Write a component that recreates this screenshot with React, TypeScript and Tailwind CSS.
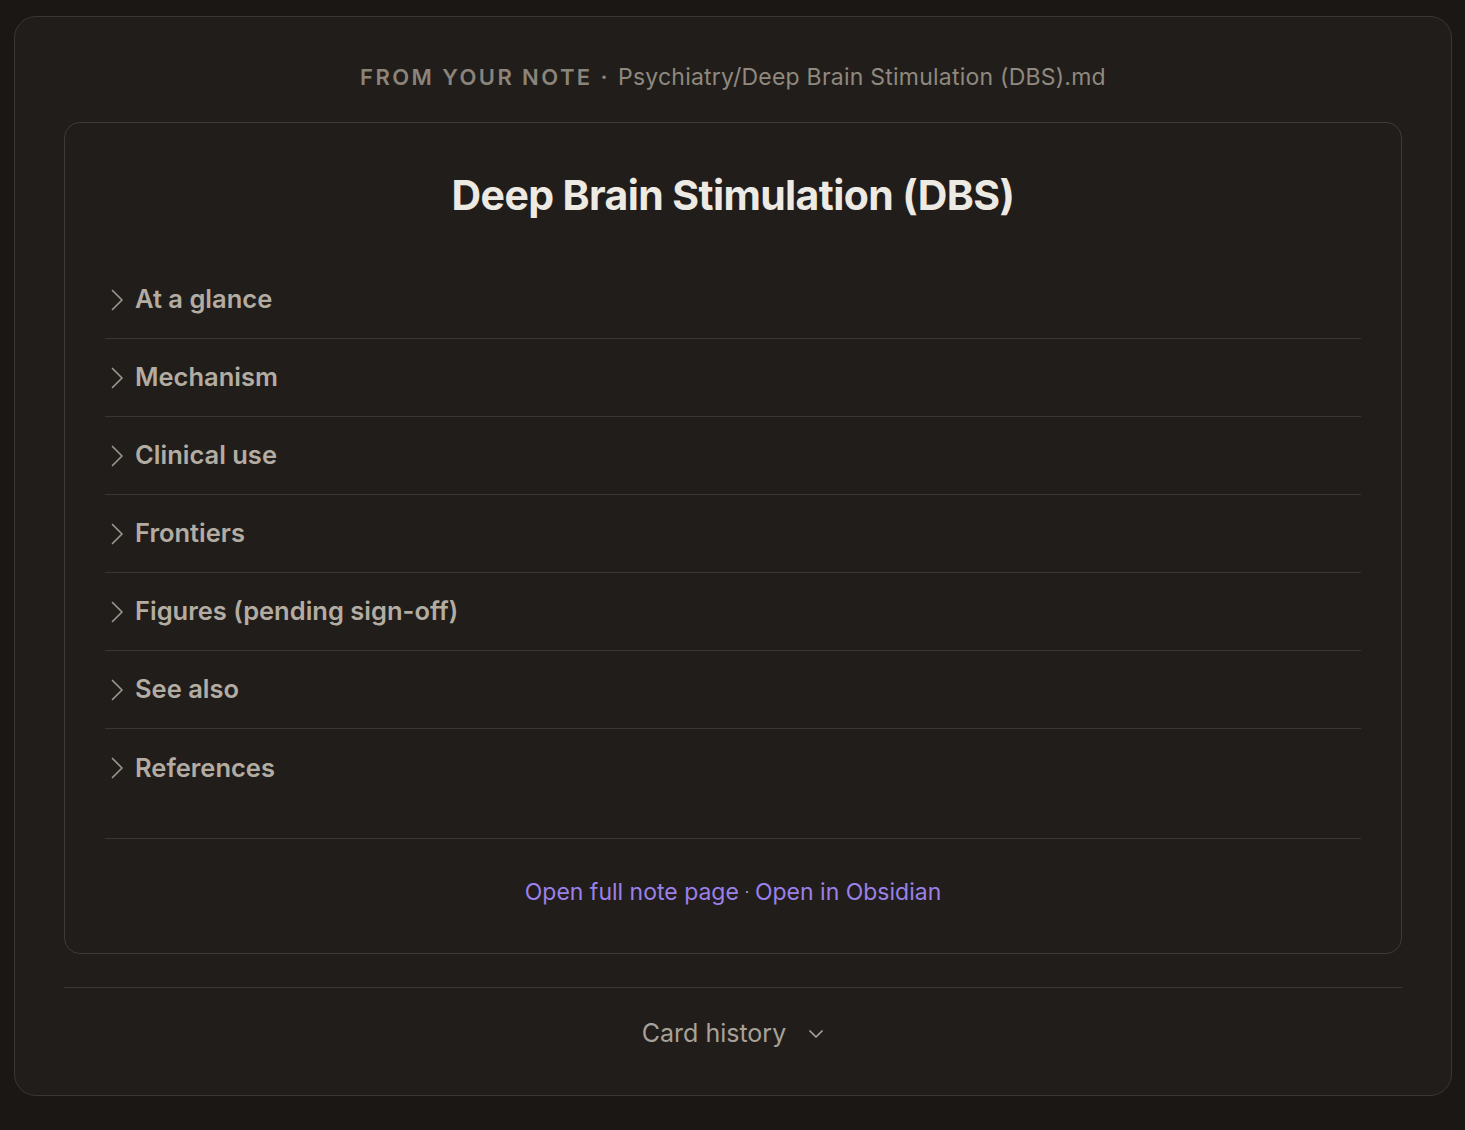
import React from 'react';

const sections = [
  'At a glance',
  'Mechanism',
  'Clinical use',
  'Frontiers',
  'Figures (pending sign-off)',
  'See also',
  'References',
];

const Chevron: React.FC = () => (
  <svg width="14" height="22" viewBox="0 0 14 22" fill="none" className="shrink-0">
    <path d="M2.5 1.5 L12 11 L2.5 20.5" stroke="#9b948a" strokeWidth="1.7" strokeLinecap="round" strokeLinejoin="round" />
  </svg>
);

const App: React.FC = () => {
  return (
    <div className="min-h-[1130px] w-full bg-[#1a1715] pt-4 pl-[14px] pr-[13px] font-['Inter',sans-serif]">
      <div className="h-[1080px] rounded-[22px] border border-[#3a3631] bg-[#211d1a] px-[49px]">
        {/* Source line */}
        <div className="flex h-[105px] items-center justify-center gap-2 pt-[16px]">
          <span className="text-[22px] font-semibold uppercase tracking-[0.11em] text-[#8a847b]">
            From your note ·
          </span>
          <span className="text-[23px] text-[#8f897f] tracking-[0.01em]">
            Psychiatry/Deep Brain Stimulation (DBS).md
          </span>
        </div>

        {/* Note card */}
        <div className="rounded-[16px] border border-[#3e3a35] px-10 pt-[48px] pb-[46px]">
          <h1 className="text-center text-[41px] font-bold leading-[48px] tracking-[-0.015em] text-[#ede9e3]">
            Deep Brain Stimulation (DBS)
          </h1>

          <div className="mt-[42px]">
            {sections.map((s, i) => (
              <div
                key={s}
                className={`flex h-[78px] items-center gap-[11px] pl-[5px] ${
                  i < sections.length - 1 ? 'border-b border-[#3a3631]' : ''
                }`}
              >
                <Chevron />
                <span className="text-[25.5px] font-semibold text-[#b3aca2]">{s}</span>
              </div>
            ))}
          </div>

          <div className="mt-[31px] flex items-center justify-center gap-[6px] border-t border-[#3a3631] pt-[38px] text-[23px] leading-[30px] text-[#9b80ea]">
            <span>Open full note page</span>
            <span className="text-[#d9d4cc] text-[14px]">·</span>
            <span>Open in Obsidian</span>
          </div>
        </div>

        {/* Card history */}
        <div className="mt-[33px] flex h-[92px] items-center justify-center gap-[22px] border-t border-[#3a3631]">
          <span className="text-[25px] text-[#a8a198]">Card history</span>
          <svg width="16" height="10" viewBox="0 0 16 10" fill="none">
            <path d="M2 2 L8 8 L14 2" stroke="#a8a198" strokeWidth="1.7" strokeLinecap="round" strokeLinejoin="round" />
          </svg>
        </div>
      </div>
    </div>
  );
};

export default App;
